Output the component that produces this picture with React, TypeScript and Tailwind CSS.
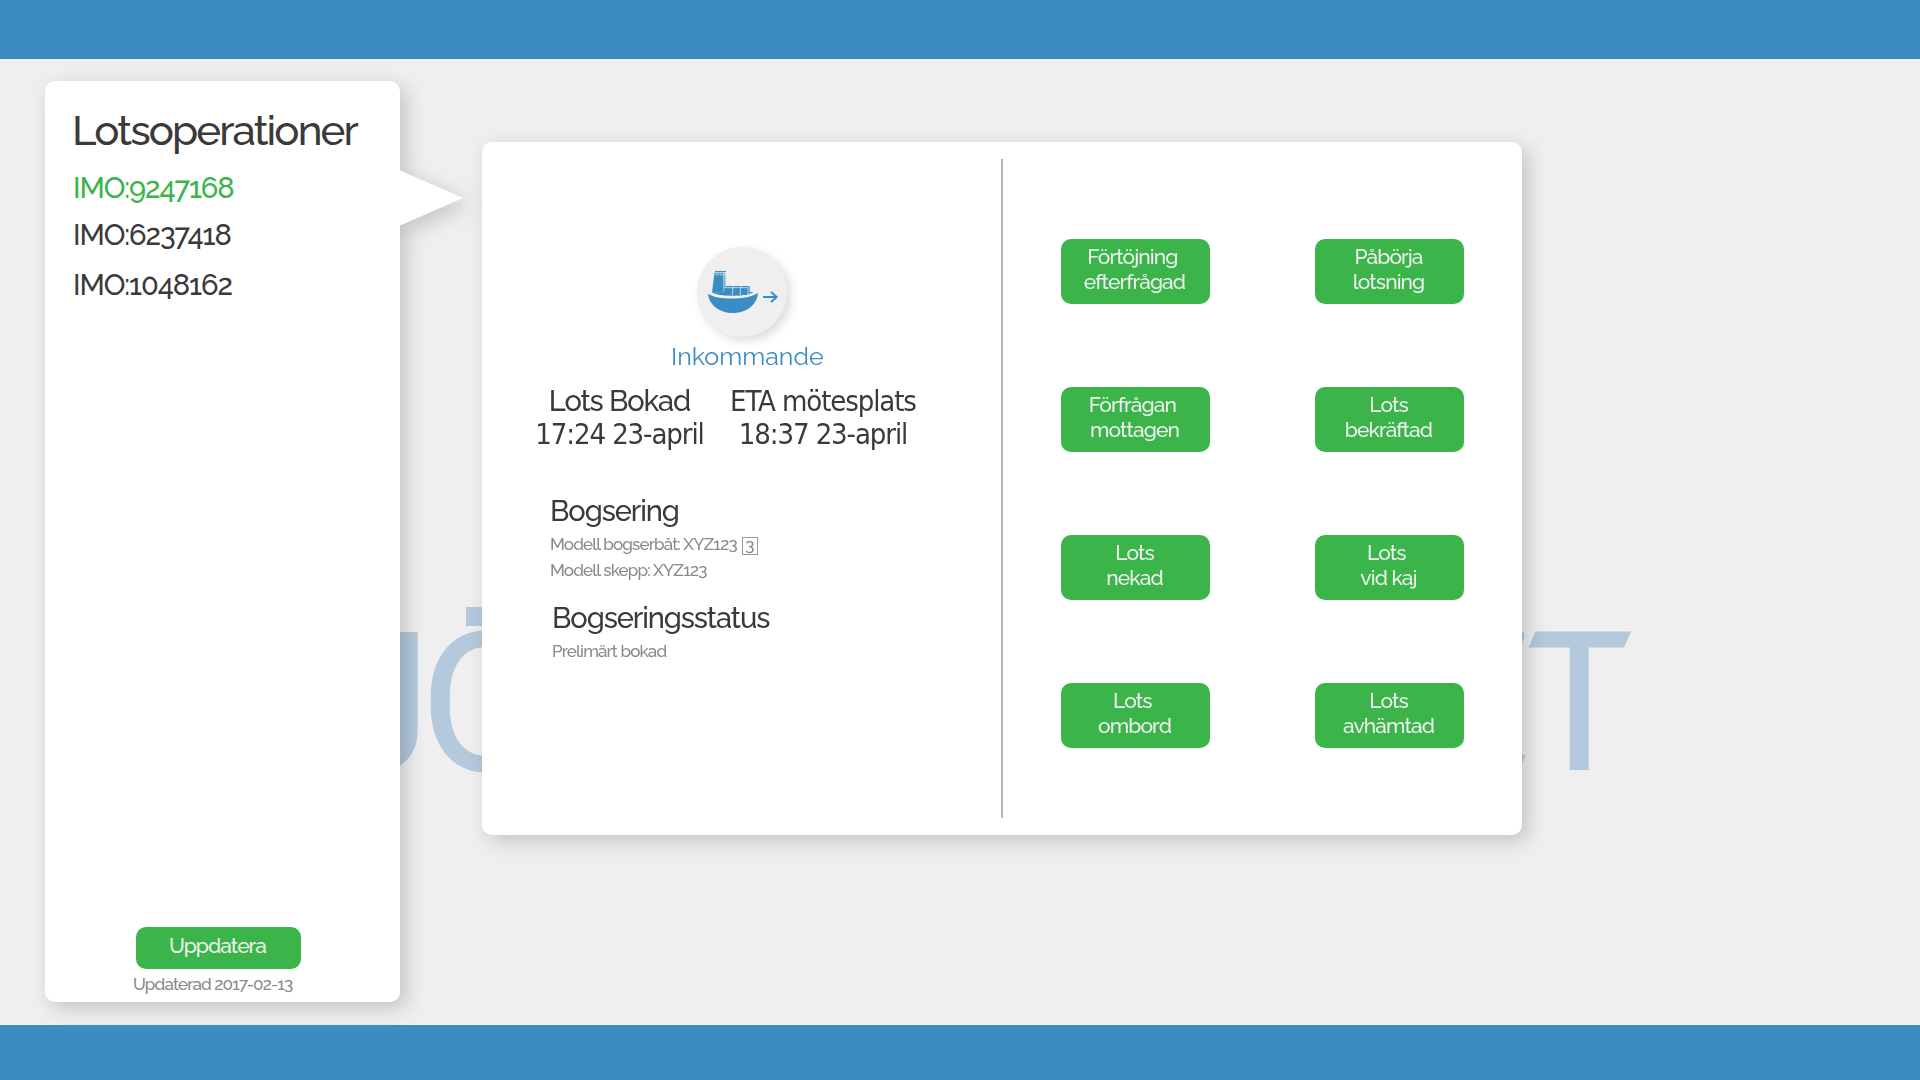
import React from "react";

const imoNumbers = [
  { label: "IMO:9247168", className: "mt-[12px] text-[#39b54a]" },
  { label: "IMO:6237418", className: "mt-[7px]" },
  { label: "IMO:1048162", className: "mt-[10px]" },
];

const actions: [string, string][] = [
  ["Förtöjning\u00a0", "efterfrågad"],
  ["Påbörja", "lotsning"],
  ["Förfrågan\u00a0", "mottagen"],
  ["Lots", "bekräftad"],
  ["Lots", "nekad"],
  ["Lots\u00a0", "vid kaj"],
  ["Lots\u00a0", "ombord"],
  ["Lots", "avhämtad"],
];

function ShipIcon() {
  return (
    <svg viewBox="0 0 264 180" className="ml-[3px] h-[60px] w-[88px] shrink-0" fill="#3b8cc3">
      <path d="M36 93L74 90H162C152 101 128 105 101 105C76 105 52 101 36 93Z" />
      <path d="M24 95C50 114 140 116 174 93C171 128 140 153 99 153C58 153 27 128 24 95Z" />
      <path d="M28 92C56 109 142 110 170 89" stroke="#efefef" strokeWidth="7" fill="none" />
      <path d="M43 35H70L71 92H36Z" />
      <path d="M45 27H78V30H45Z" />
      <path d="M43 32H74V35H43Z" />
      <path d="M72 38L76 35L77 90L72 92Z" opacity="0.65" />
      <path d="M46 38.500H70" stroke="#efefef" strokeWidth="3" strokeDasharray="4 3" />
      <path d="M73 78L79 72H149V94L143 99H73Z" />
      <path
        d="M73 77H144M144 77L149 72M98 77V99M121 77V99M144 77V99M98 77L103 72M121 77L126 72"
        stroke="#cfe1ee"
        strokeWidth="2.500"
        fill="none"
      />
      <path d="M189 105H230M213 90L230 105L213 120" stroke="#3b8cc3" strokeWidth="6" fill="none" />
    </svg>
  );
}

function Watermark() {
  return (
    <div className="absolute top-[545px] left-[223px] flex font-['Roboto',sans-serif] text-[193px] leading-[200px] font-normal whitespace-nowrap text-[#b4c9dc] [-webkit-text-stroke:1px_#b4c9dc]">
      <span className="absolute top-[3px] left-[243px] flex gap-[11px]">
        <span className="size-[19px] bg-[#b4c9dc]" />
        <span className="size-[19px] bg-[#b4c9dc]" />
      </span>
      <span className="tracking-[-12px] [clip-path:inset(24px_-20px_0_0)]">SJÖ</span>
      <span className="tracking-[-16.5px] [clip-path:polygon(0_0,986px_0,986px_27px,978px_47px,978px_140px,986px_147px,978px_168px,0_168px)]">
        FARTSVERKE
      </span>
      <span className="ml-[7px] tracking-normal [clip-path:polygon(14px_27px,110px_27px,101px_47px,101px_200px,6px_200px,6px_47px)]">
        T
      </span>
    </div>
  );
}

function Sidebar() {
  return (
    <aside className="relative mt-[22px] ml-[45px] flex h-[921px] w-[355px] shrink-0 flex-col rounded-[10px] bg-white drop-shadow-[6px_6px_10px_rgba(0,0,0,0.18)]">
      <div className="absolute top-[89px] left-[354px] h-[56px] w-[64px] bg-white [clip-path:polygon(0_0,100%_50%,0_100%)]" />
      <h1 className="mt-[25px] ml-[27px] text-[42px] leading-[50px] tracking-[-1.9px] whitespace-nowrap">
        Lotsoperationer
      </h1>
      <ul className="ml-[28px] text-[29px] leading-[40px] tracking-[-1.1px]">
        {imoNumbers.map((imo) => (
          <li key={imo.label} className={imo.className}>
            {imo.label}
          </li>
        ))}
      </ul>
      <button className="mt-auto ml-[91px] h-[42px] w-[165px] shrink-0 rounded-[10px] bg-[#3bb54a] pr-[2px] pb-[4px] text-[21px] leading-[38px] tracking-[-0.95px] text-[#efefef]">
        Uppdatera
      </button>
      <p className="mt-[5px] mb-[8px] ml-[88px] text-[17px] leading-[20px] tracking-[-0.85px] text-[#8a8a8a]">
        Updaterad 2017-02-13
      </p>
    </aside>
  );
}

function Booking({ title, time, className }: { title: string; time: string; className: string }) {
  return (
    <div className={className}>
      <div>{title}</div>
      <div className="font-['DejaVu_Sans_Condensed','DejaVu_Sans',sans-serif] [font-stretch:condensed]">{time}</div>
    </div>
  );
}

function Details() {
  return (
    <section className="w-[519px] shrink-0 pt-[105px]">
      <div className="ml-[215px] flex size-[90px] items-center rounded-full bg-[#efefef] shadow-[4px_4px_10px_rgba(0,0,0,0.14)]">
        <ShipIcon />
      </div>
      <p className="mt-[4px] ml-[189px] text-[25px] leading-[30px] font-normal text-[#3b8cc3]">
        Inkommande
      </p>
      <div className="mt-[14px] flex text-[29px] leading-[33px] tracking-[-1.1px] whitespace-nowrap">
        <Booking title="Lots Bokad" time="17:24 23-april" className="ml-[53px] w-[169px] text-center" />
        <Booking
          title="ETA mötesplats"
          time="18:37 23-april"
          className="ml-[19px] w-[200px] text-center font-['DejaVu_Sans_Condensed','DejaVu_Sans',sans-serif] [font-stretch:condensed]"
        />
      </div>
      <div className="mt-[40px] ml-[68px]">
        <h2 className="text-[29px] leading-[40px] tracking-[-1.1px]">Bogsering</h2>
        <div className="text-[17px] leading-[26px] tracking-[-0.85px] text-[#8a8a8a]">
          <p className="flex items-center">
            Modell bogserbåt: XYZ123
            <span className="mt-[3px] ml-[5px] h-[18px] w-[16px] border border-[#9a9a9a] text-center leading-[14px] tracking-normal">
              3
            </span>
          </p>
          <p>Modell skepp: XYZ123</p>
        </div>
      </div>
      <div className="mt-[15px] ml-[70px]">
        <h2 className="text-[29px] leading-[40px] tracking-[-1.1px]">Bogseringsstatus</h2>
        <p className="text-[17px] leading-[26px] tracking-[-0.85px] text-[#8a8a8a]">Prelimärt bokad</p>
      </div>
    </section>
  );
}

function DetailCard() {
  return (
    <article className="relative mt-[83px] ml-[82px] flex h-[693px] w-[1040px] shrink-0 rounded-[10px] bg-white drop-shadow-[6px_6px_10px_rgba(0,0,0,0.18)]">
      <Details />
      <div className="mt-[17px] h-[659px] w-[2px] shrink-0 bg-[#a9bab1]" />
      <section className="mt-[97px] ml-[58px] grid grid-cols-[149px_149px] content-start gap-x-[105px] gap-y-[83px]">
        {actions.map(([first, second]) => (
          <button
            key={first + second}
            className="h-[65px] rounded-[10px] bg-[#3bb54a] pr-[2px] pb-[6px] text-[21px] leading-[25px] tracking-[-0.9px] text-[#efefef]"
          >
            {first}
            <br />
            {second}
          </button>
        ))}
      </section>
    </article>
  );
}

export default function App() {
  return (
    <div className="flex h-[1080px] w-[1920px] flex-col overflow-hidden bg-[#efefef] font-['Raleway','Lato',sans-serif] font-medium text-[#3a3a3a]">
      <header className="h-[59px] shrink-0 bg-[#3b8cc3]" />
      <main className="relative flex flex-1 items-start">
        <Watermark />
        <Sidebar />
        <DetailCard />
      </main>
      <footer className="relative h-[55px] shrink-0 bg-[#3b8cc3]" />
    </div>
  );
}
